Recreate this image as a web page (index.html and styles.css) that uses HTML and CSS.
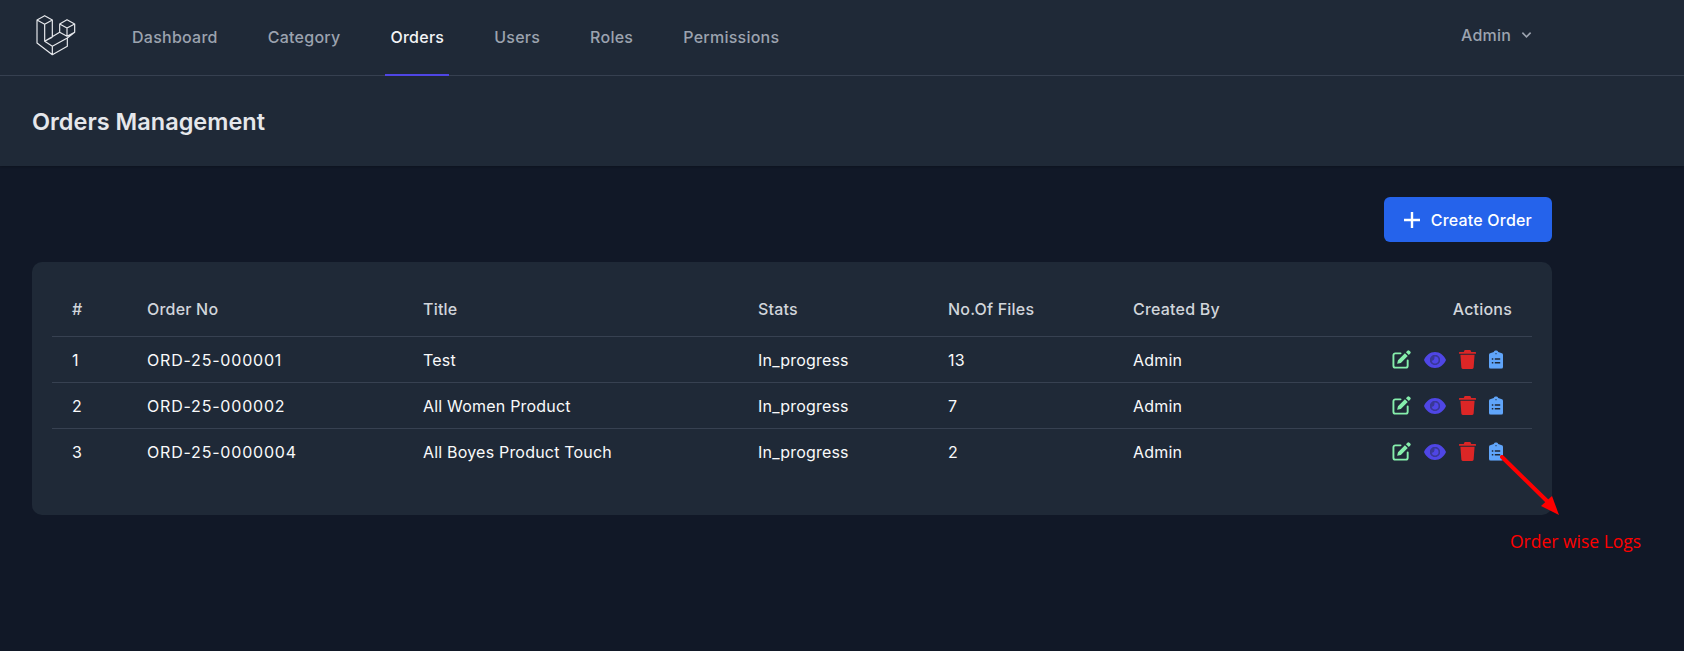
FILE: index.html
```html
<!DOCTYPE html>
<html lang="en">
<head>
  <meta charset="UTF-8">
  <meta name="viewport" content="width=device-width, initial-scale=1.0">
  <title>Orders Management</title>
  <link rel="stylesheet" href="styles.css">
</head>
<body>
  <!-- Top navigation -->
  <nav class="topnav">
    <div class="nav-left">
      <svg class="logo" viewBox="40 25 135 135" fill="none" stroke="#e5e7eb" stroke-width="3.600" stroke-linejoin="round">
        <path d="M52 46 75 33 98 46 75 59zM52 46v69l46 35 45-25v-25M98 46v52M75 59v51l23 15v25M75 110l23-12M75 110l45-27M98 125l45-25 22-17M120 58l22-13 23 13-23 12zM120 58v25l22 12 23-12V58M142 70v25"/>
      </svg>
      <div class="nav-links">
        <a class="nav-link" href="#">Dashboard</a>
        <a class="nav-link" href="#">Category</a>
        <a class="nav-link active" href="#">Orders</a>
        <a class="nav-link" href="#">Users</a>
        <a class="nav-link" href="#">Roles</a>
        <a class="nav-link" href="#">Permissions</a>
      </div>
    </div>
    <div class="user-menu">
      Admin
      <svg class="chevron" viewBox="0 0 12 8" fill="none" stroke="currentColor" stroke-width="1.800"><path d="M1.500 1.500 6 6l4.500-4.500"/></svg>
    </div>
  </nav>

  <header class="page-header">
    <h1>Orders Management</h1>
  </header>

  <main class="content">
    <div class="toolbar">
      <a class="btn-create" href="#">
        <svg viewBox="0 0 16 16" fill="none" stroke="currentColor" stroke-width="2.400"><path d="M8 0v16M0 8h16"/></svg>
        Create Order
      </a>
    </div>

    <div class="card">
      <table class="orders">
        <colgroup>
          <col class="c-id"><col class="c-no"><col class="c-title"><col class="c-stats"><col class="c-files"><col class="c-by"><col>
        </colgroup>
        <thead>
          <tr>
            <th>#</th>
            <th>Order No</th>
            <th>Title</th>
            <th>Stats</th>
            <th>No.Of Files</th>
            <th>Created By</th>
            <th class="right">Actions</th>
          </tr>
        </thead>
        <tbody>
          <tr>
            <td>1</td>
            <td class="order-no">ORD-25-000001</td>
            <td>Test</td>
            <td>In_progress</td>
            <td>13</td>
            <td>Admin</td>
            <td><div class="actions">
              <svg class="ico edit" viewBox="0 0 20 20"><use href="#i-edit"/></svg>
              <svg class="ico eye" viewBox="0 0 22 16"><use href="#i-eye"/></svg>
              <svg class="ico trash" viewBox="0 0 18 20"><use href="#i-trash"/></svg>
              <svg class="ico clip" viewBox="0 0 15 20"><use href="#i-clip"/></svg>
            </div></td>
          </tr>
          <tr>
            <td>2</td>
            <td class="order-no">ORD-25-000002</td>
            <td>All Women Product</td>
            <td>In_progress</td>
            <td>7</td>
            <td>Admin</td>
            <td><div class="actions">
              <svg class="ico edit" viewBox="0 0 20 20"><use href="#i-edit"/></svg>
              <svg class="ico eye" viewBox="0 0 22 16"><use href="#i-eye"/></svg>
              <svg class="ico trash" viewBox="0 0 18 20"><use href="#i-trash"/></svg>
              <svg class="ico clip" viewBox="0 0 15 20"><use href="#i-clip"/></svg>
            </div></td>
          </tr>
          <tr>
            <td>3</td>
            <td class="order-no">ORD-25-0000004</td>
            <td>All Boyes Product Touch</td>
            <td>In_progress</td>
            <td>2</td>
            <td>Admin</td>
            <td><div class="actions">
              <svg class="ico edit" viewBox="0 0 20 20"><use href="#i-edit"/></svg>
              <svg class="ico eye" viewBox="0 0 22 16"><use href="#i-eye"/></svg>
              <svg class="ico trash" viewBox="0 0 18 20"><use href="#i-trash"/></svg>
              <svg class="ico clip" viewBox="0 0 15 20"><use href="#i-clip"/></svg>
            </div></td>
          </tr>
        </tbody>
      </table>
    </div>
  </main>

  <!-- Annotation drawn over the screenshot -->
  <svg class="note-arrow" viewBox="0 0 70 70" fill="#f00">
    <path d="M2 2 47 46" stroke="#f00" stroke-width="4" stroke-linecap="round"/>
    <path d="M59 60 41 51 52 41z"/>
  </svg>
  <span class="note-text">Order wise Logs</span>

  <!-- Icon definitions -->
  <svg class="defs" aria-hidden="true">
    <symbol id="i-edit" viewBox="0 0 20 20">
      <path d="M9 3.500H3.500a2 2 0 0 0-2 2V16.500a2 2 0 0 0 2 2H14.500a2 2 0 0 0 2-2V11" fill="none" stroke="currentColor" stroke-width="2" stroke-linecap="round"/>
      <path d="M16.200.8a1.500 1.500 0 0 1 2.100 0l.9.9a1.500 1.500 0 0 1 0 2.100l-1.500 1.500-3-3zM13.600 3.400l3 3-7.300 7.300-3.900.9.900-3.900z" fill="currentColor"/>
    </symbol>
    <symbol id="i-eye" viewBox="0 0 22 16">
      <path fill-rule="evenodd" d="M11 0c5 0 9 3.500 11 8-2 4.500-6 8-11 8S2 12.500 0 8c2-4.500 6-8 11-8zm0 3a5 5 0 1 0 0 10 5 5 0 0 0 0-10z" fill="currentColor"/>
      <circle cx="11" cy="8" r="5" fill="currentColor" opacity=".55"/>
      <path d="M11 4.500a3.500 3.500 0 1 1-3.400 4.300c1.500.3 3.300-1.100 2.900-4.200z" fill="currentColor"/>
    </symbol>
    <symbol id="i-trash" viewBox="0 0 18 20">
      <path d="M6 0h6l1 2h4.500a.5.5 0 0 1 .5.500V4H0V2.500A.5.5 0 0 1 .5 2H5zM1.500 5h15l-1 13.500A1.600 1.600 0 0 1 14 20H4a1.600 1.600 0 0 1-1.500-1.500z" fill="currentColor"/>
    </symbol>
    <symbol id="i-clip" viewBox="0 0 15 20">
      <path fill-rule="evenodd" d="M7.500 0a2.500 2.500 0 0 1 2.400 2l3.100 1a2 2 0 0 1 2 2v13a2 2 0 0 1-2 2H2a2 2 0 0 1-2-2V5a2 2 0 0 1 2-2l3.100-1A2.500 2.500 0 0 1 7.500 0zM7 3v1.500h1V3zM3 8.700v1.600h1.600V8.700zm3.200 0v1.600H12V8.700zm-3.200 4v1.600h1.600v-1.600zm3.200 0v1.600H12v-1.600z" fill="currentColor"/>
    </symbol>
  </svg>
</body>
</html>
```

FILE: styles.css
```css
/* Page */
html, body {
  height: 100%;
}

body {
  margin: 0;
  background-color: #111827;
  color: #f3f4f6;
  font-family: Inter, "Noto Sans", sans-serif;
  font-size: 16px;
  letter-spacing: .2px;
  overflow: hidden;
  position: relative;
}

a {
  text-decoration: none;
  color: inherit;
}

.defs {
  width: 0;
  height: 0;
  position: absolute;
  left: 0;
  top: 0;
}

/* Top navigation */
.topnav {
  height: 75px;
  background-color: #1f2937;
  border-bottom: 1px solid #374151;
  display: flex;
  justify-content: space-between;
  padding: 0 152px 0 33px;
}

.nav-left {
  display: flex;
}

.logo {
  width: 45px;
  height: 45px;
  margin-top: 13px;
  margin-right: 49px;
}

.nav-links {
  display: flex;
  gap: 40px;
  letter-spacing: .25px;
}

.nav-link {
  display: flex;
  align-items: center;
  padding: 0 5px;
  margin-bottom: -1px;
  border-bottom: 2px solid transparent;
  color: #9ca3af;
  font-weight: 500;
  height: 74px;
}

.nav-link.active {
  color: #f3f4f6;
  border-bottom-color: #4f46e5;
}

.user-menu {
  display: flex;
  align-items: center;
  gap: 10px;
  color: #9ca3af;
  font-weight: 500;
  height: 70px;
}

.chevron {
  width: 11px;
  height: 8px;
}

/* Page title */
.page-header {
  height: 90px;
  box-sizing: border-box;
  background-color: #1f2937;
  padding: 0 32px;
  display: flex;
  align-items: center;
  box-shadow: 0 1px 2px rgba(0, 0, 0, .2);
}

.page-header h1 {
  margin: 0;
  font-size: 23.500px;
  font-weight: 600;
  letter-spacing: 0;
  color: #e5e7eb;
}

/* Content */
.content {
  width: 1520px;
  margin-left: 32px;
  padding-top: 31px;
}

.toolbar {
  display: flex;
  justify-content: flex-end;
  margin-bottom: 20px;
}

.btn-create {
  display: flex;
  align-items: center;
  gap: 11px;
  height: 45px;
  padding: 0 20px;
  background-color: #2563eb;
  border-radius: 6px;
  color: #fff;
  font-weight: 500;
}

.btn-create svg {
  width: 16px;
  height: 16px;
}

.card {
  background-color: #1f2937;
  border-radius: 10px;
  height: 253px;
  padding: 19px 20px;
  box-sizing: border-box;
}

/* Orders table */
.orders {
  width: 100%;
  border-collapse: collapse;
  table-layout: fixed;
}

.c-id { width: 75px; }
.c-no { width: 276px; }
.c-title { width: 335px; }
.c-stats { width: 190px; }
.c-files { width: 185px; }
.c-by { width: 219px; }

.orders th {
  height: 55px;
  padding: 0 20px;
  text-align: left;
  font-weight: 500;
  color: #d1d5db;
  border-bottom: 1px solid #374151;
}

.orders th.right {
  text-align: right;
}

.orders td {
  height: 45px;
  padding: 0 20px;
  color: #f9fafb;
  border-bottom: 1px solid #374151;
}

.orders td.order-no {
  letter-spacing: .8px;
}

.orders tbody tr:last-child td {
  border-bottom: none;
}

.actions {
  display: flex;
  justify-content: flex-end;
  align-items: center;
  gap: 13px;
  padding-right: 9px;
}

.ico {
  display: block;
}

.ico.edit { width: 19px; height: 19px; color: #86efac; }
.ico.eye { width: 22px; height: 16px; color: #4f46e5; }
.ico.trash { width: 17px; height: 19px; color: #dc2626; }
.ico.clip { width: 14px; height: 19px; color: #60a5fa; }

/* Red note over the page */
.note-arrow {
  position: absolute;
  left: 1500px;
  top: 455px;
  width: 70px;
  height: 70px;
}

.note-text {
  position: absolute;
  left: 1510px;
  top: 529px;
  color: #f00;
  font-family: "Open Sans", sans-serif;
  font-size: 17.500px;
  letter-spacing: 0;
}
```
